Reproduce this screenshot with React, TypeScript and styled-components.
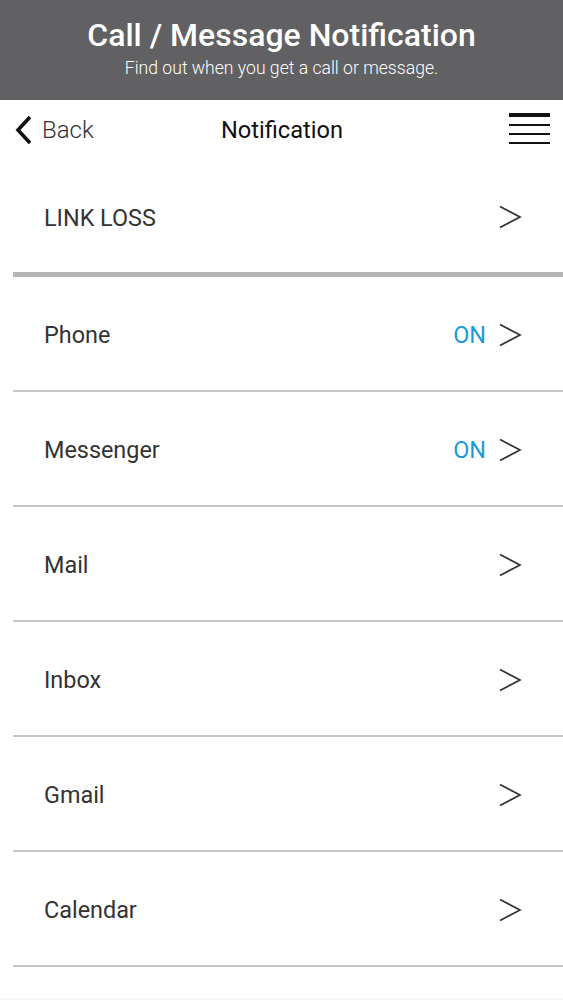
import React from "react";
import styled, { createGlobalStyle } from "styled-components";

const Global = createGlobalStyle`
  html, body { margin: 0; padding: 0; background: #f6f6f6; }
  body { font-family: Roboto, "Noto Sans", "Liberation Sans", sans-serif; }
  * { box-sizing: border-box; }
`;

const Page = styled.div`
  width: 563px;
  height: 998px;
  background: #ffffff;
  display: flex;
  flex-direction: column;
`;

const Header = styled.header`
  height: 100px;
  background: #616062;
  color: #ffffff;
  display: flex;
  flex-direction: column;
  align-items: center;
  padding-top: 14px;
`;

const Title = styled.h1`
  margin: 0;
  font-size: 32px;
  font-weight: 500;
  line-height: 42px;
`;

const Subtitle = styled.p`
  margin: 0;
  font-size: 17.6px;
  font-weight: 300;
  line-height: 20px;
  margin-top: 2px;
`;

const NavBar = styled.nav`
  height: 60px;
  display: grid;
  grid-template-columns: 1fr auto 1fr;
  align-items: center;
  padding: 0 13px 0 14px;
`;

const BackButton = styled.div`
  display: flex;
  align-items: center;
  gap: 9px;
  font-size: 24px;
  font-weight: 300;
  color: #333;
`;

const NavTitle = styled.div`
  font-size: 23.6px;
  color: #111;
  font-weight: 400;
  margin-bottom: 1px;
`;

const MenuButton = styled.div`
  justify-self: end;
  width: 41px;
  display: flex;
  flex-direction: column;
  gap: 7px;
  margin-bottom: 3px;
`;

const MenuLine = styled.span<{ $thick?: boolean }>`
  display: block;
  height: ${(p) => (p.$thick ? 4 : 2)}px;
  background: #111;
`;

const List = styled.div`
  display: flex;
  flex-direction: column;
  padding-left: 13px;
`;

const Row = styled.div<{ $height: number; $border: number; $borderColor: string }>`
  height: ${(p) => p.$height}px;
  border-bottom: ${(p) => p.$border}px solid ${(p) => p.$borderColor};
  display: flex;
  align-items: center;
  padding: 3px 41px 0 31px;
`;

const Label = styled.span`
  flex: 1;
  font-size: 23.4px;
  color: #333;
`;

const Status = styled.span`
  font-size: 23.4px;
  color: #1a9ad7;
  margin-right: 13px;
`;

const ChevronIcon = styled.svg`
  margin-top: -1px;
`;

const Chevron = () => (
  <ChevronIcon width="23" height="24" viewBox="0 0 23 24">
    <polyline points="1,1.5 21,12 1,22.5" fill="none" stroke="#333" strokeWidth="1.7" />
  </ChevronIcon>
);

const BackChevron = () => (
  <svg width="19" height="30" viewBox="0 0 19 30">
    <polyline points="16,2 4,15 16,28" fill="none" stroke="#111" strokeWidth="3.6" />
  </svg>
);

const items: { label: string; on?: boolean }[] = [
  { label: "Phone", on: true },
  { label: "Messenger", on: true },
  { label: "Mail" },
  { label: "Inbox" },
  { label: "Gmail" },
  { label: "Calendar" },
];

export default function App() {
  return (
    <>
      <Global />
      <Page>
        <Header>
          <Title>Call / Message Notification</Title>
          <Subtitle>Find out when you get a call or message.</Subtitle>
        </Header>
        <NavBar>
          <BackButton>
            <BackChevron />
            Back
          </BackButton>
          <NavTitle>Notification</NavTitle>
          <MenuButton>
            <MenuLine $thick />
            <MenuLine />
            <MenuLine />
            <MenuLine />
          </MenuButton>
        </NavBar>
        <List>
          <Row $height={117} $border={5} $borderColor="#b5b5b5">
            <Label>LINK LOSS</Label>
            <Chevron />
          </Row>
          {items.map((it) => (
            <Row key={it.label} $height={115} $border={2} $borderColor="#c6c6c6">
              <Label>{it.label}</Label>
              {it.on && <Status>ON</Status>}
              <Chevron />
            </Row>
          ))}
        </List>
      </Page>
    </>
  );
}
